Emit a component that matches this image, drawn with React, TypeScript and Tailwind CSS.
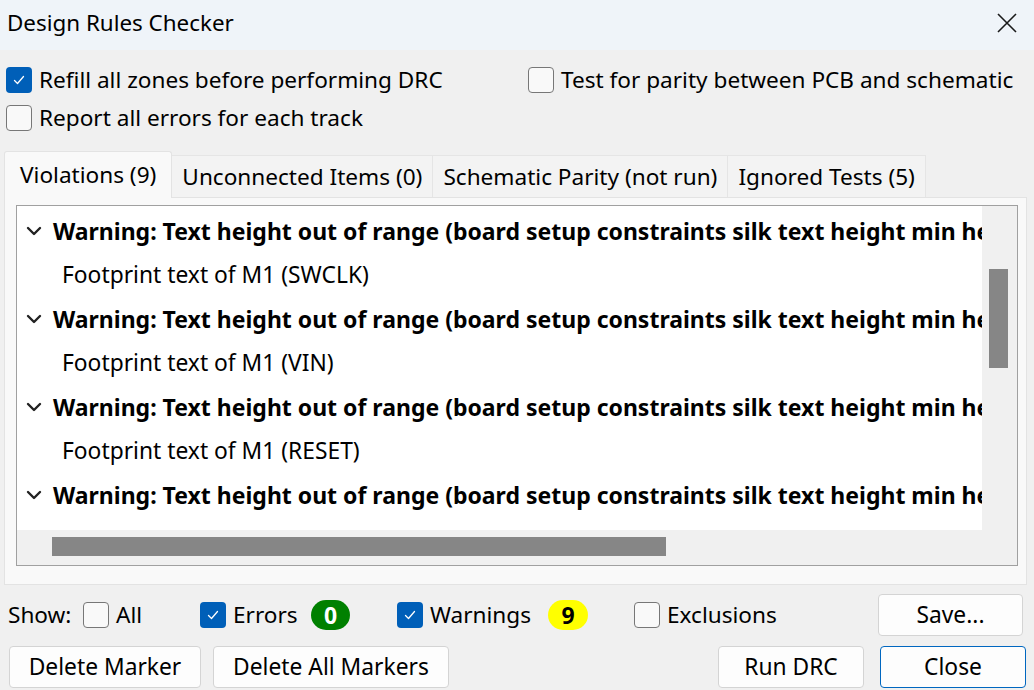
import React from 'react'

const FONT = { fontFamily: '"Noto Sans", "Open Sans", sans-serif' }

// ── Bits ──────────────────────────────────────────────────────────────────────

function Check({ checked }: { checked: boolean }) {
  if (checked) {
    return (
      <span className="inline-flex items-center justify-center w-[26px] h-[26px] rounded-[4px] bg-[#005fb8] shrink-0">
        <svg width="14" height="14" viewBox="0 0 14 14" fill="none">
          <path d="M2.5 7.5 L5.5 10.5 L11.5 3.5" stroke="white" strokeWidth="1.3" strokeLinecap="round" strokeLinejoin="round" />
        </svg>
      </span>
    )
  }
  return <span className="inline-block w-[26px] h-[26px] rounded-[4px] border border-[#777] bg-[#f9f9f9] shrink-0" />
}

function CheckLabel({ checked, label, className = '' }: { checked: boolean; label: string; className?: string }) {
  return (
    <div className={`flex items-center gap-[7px] ${className}`}>
      <Check checked={checked} />
      <span className="text-[22.6px] text-black leading-none whitespace-nowrap">{label}</span>
    </div>
  )
}

function Btn({ label, w, focus }: { label: string; w: string; focus?: boolean }) {
  return (
    <div
      className={`${w} h-[42px] flex items-center justify-center rounded-[4px] bg-[#fdfdfd] text-[22.8px] text-black border ${
        focus ? 'border-[#0067c0]' : 'border-[#d4d4d4]'
      }`}
    >
      {label}
    </div>
  )
}

function Chevron() {
  return (
    <svg width="16" height="10" viewBox="0 0 16 10" className="shrink-0">
      <path d="M2 2 L8 8 L14 2" stroke="#222" strokeWidth="2.4" fill="none" strokeLinecap="round" strokeLinejoin="round" />
    </svg>
  )
}

const ITEMS = ['SWCLK', 'VIN', 'RESET']
const WARN = 'Warning: Text height out of range (board setup constraints silk text height min height 0.8 mm)'

function WarnRow() {
  return (
    <div className="h-[44px] flex items-center pl-[9px] gap-[11px] whitespace-nowrap">
      <Chevron />
      <span className="text-[23px] font-bold text-black">{WARN}</span>
    </div>
  )
}

// ── App ───────────────────────────────────────────────────────────────────────

export default function App() {
  return (
    <div className="w-[1034px] h-[690px] bg-[#f0f0f0] overflow-hidden flex flex-col" style={FONT}>
      {/* Title bar */}
      <div className="h-[50px] bg-[#eff4f9] flex items-center justify-between pl-[7px] pr-[16px] pb-[4px] shrink-0">
        <span className="text-[22.4px] text-black">Design Rules Checker</span>
        <svg width="22" height="22" viewBox="0 0 22 22">
          <path d="M2 2 L20 20 M20 2 L2 20" stroke="#1a1a1a" strokeWidth="1.6" />
        </svg>
      </div>

      {/* Options */}
      <div className="flex pl-[6px] pt-[17px]">
        <div className="flex flex-col gap-[12px] w-[522px]">
          <CheckLabel checked label="Refill all zones before performing DRC" />
          <CheckLabel checked={false} label="Report all errors for each track" />
        </div>
        <CheckLabel checked={false} label="Test for parity between PCB and schematic" className="self-start" />
      </div>

      {/* Tabs */}
      <div className="flex items-end pl-[4px] mt-[19px] h-[47px] shrink-0">
        <div className="h-[47px] px-[15px] flex items-center bg-[#f9f9f9] border border-b-0 border-[#e3e3e3] rounded-t-[3px] text-[22.6px] text-black relative z-10 -mb-px">
          Violations (9)
        </div>
        {['Unconnected Items (0)', 'Schematic Parity (not run)', 'Ignored Tests (5)'].map((t) => (
          <div key={t} className="h-[42px] px-[10px] flex items-center bg-[#f3f3f3] border border-l-0 border-b-0 border-[#e5e5e5] text-[22.6px] text-black whitespace-nowrap">
            {t}
          </div>
        ))}
      </div>

      {/* Panel */}
      <div className="mx-[4px] w-[1023px] h-[388px] bg-[#f9f9f9] border border-[#e3e3e3] pt-[7px] pl-[11px] shrink-0">
        <div className="w-[1002px] h-[361px] border border-[#a0a0a0] flex flex-col bg-[#f0f0f0]">
          <div className="flex h-[324px]">
            <div className="w-[965px] bg-white overflow-hidden pt-[3px]">
              {ITEMS.map((it) => (
                <React.Fragment key={it}>
                  <WarnRow />
                  <div className="h-[44px] flex items-center pl-[45px] whitespace-nowrap">
                    <span className="text-[22.8px] text-black">Footprint text of M1 ({it})</span>
                  </div>
                </React.Fragment>
              ))}
              <WarnRow />
            </div>
            <div className="flex-1 bg-[#f0f0f0] pt-[63px] pl-[7px]">
              <div className="w-[19px] h-[99px] bg-[#868686]" />
            </div>
          </div>
          <div className="flex-1 pt-[7px] pl-[35px]">
            <div className="w-[614px] h-[19px] bg-[#868686]" />
          </div>
        </div>
      </div>

      {/* Show row */}
      <div className="flex items-center h-[48px] mt-[6px] pl-[8px] pr-[11px] shrink-0">
        <span className="text-[22.6px] text-black w-[75px]">Show:</span>
        <CheckLabel checked={false} label="All" className="w-[117px]" />
        <CheckLabel checked label="Errors" className="w-[111px]" />
        <span className="w-[39px] h-[30px] rounded-full bg-[#008000] text-white font-bold text-[23px] flex items-center justify-center">0</span>
        <CheckLabel checked label="Warnings" className="w-[151px] ml-[47px]" />
        <span className="w-[40px] h-[30px] rounded-full bg-[#ffff00] text-black font-bold text-[23px] flex items-center justify-center">9</span>
        <CheckLabel checked={false} label="Exclusions" className="ml-[46px]" />
        <div className="ml-auto">
          <Btn label="Save..." w="w-[145px]" />
        </div>
      </div>

      {/* Buttons */}
      <div className="flex items-center mt-[7px] pl-[9px] pr-[8px] shrink-0">
        <Btn label="Delete Marker" w="w-[192px]" />
        <div className="ml-[12px]">
          <Btn label="Delete All Markers" w="w-[236px]" />
        </div>
        <div className="ml-auto">
          <Btn label="Run DRC" w="w-[146px]" />
        </div>
        <div className="ml-[16px]">
          <Btn label="Close" w="w-[146px]" focus />
        </div>
      </div>
    </div>
  )
}
